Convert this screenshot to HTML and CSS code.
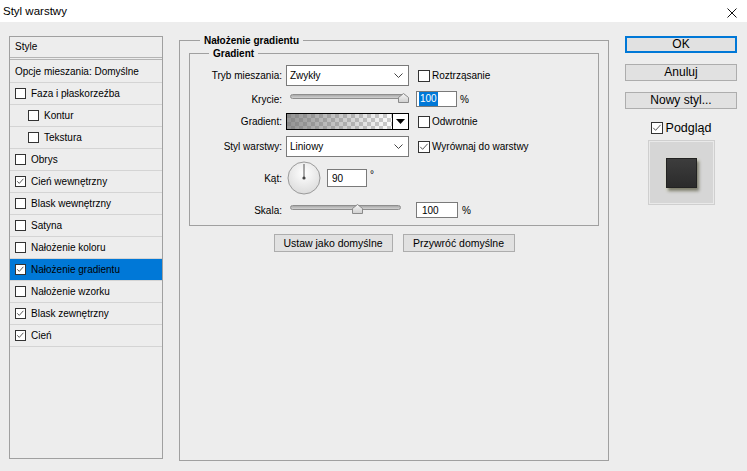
FILE: index.html
```html
<!DOCTYPE html>
<html lang="pl">
<head>
<meta charset="utf-8">
<title>Styl warstwy</title>
<link rel="stylesheet" href="styles.css">
</head>
<body>
<div class="titlebar">
  <span class="title">Styl warstwy</span>
  <svg class="close" width="10" height="10" viewBox="0 0 10 10"><path d="M0.5 0.5L9.5 9.5M9.5 0.5L0.5 9.5" stroke="#111" stroke-width="1" fill="none"/></svg>
</div>
<div class="main">
  <div class="styles">
    <div class="s-head">Style</div>
    <div class="s-row first">Opcje mieszania: Domyślne</div>
    <div class="s-row"><span class="cb small"></span>Faza i płaskorzeźba</div>
    <div class="s-row indent"><span class="cb small"></span>Kontur</div>
    <div class="s-row indent"><span class="cb small"></span>Tekstura</div>
    <div class="s-row"><span class="cb small"></span>Obrys</div>
    <div class="s-row"><span class="cb small"><svg viewBox="0 0 11 11" width="9" height="9"><path d="M1.5 5.2L4 7.8L9 2.2" stroke="#333" stroke-width="1" fill="none"/></svg></span>Cień wewnętrzny</div>
    <div class="s-row"><span class="cb small"></span>Blask wewnętrzny</div>
    <div class="s-row"><span class="cb small"></span>Satyna</div>
    <div class="s-row"><span class="cb small"></span>Nałożenie koloru</div>
    <div class="s-row selected"><span class="cb small"><svg viewBox="0 0 11 11" width="9" height="9"><path d="M1.5 5.2L4 7.8L9 2.2" stroke="#333" stroke-width="1" fill="none"/></svg></span>Nałożenie gradientu</div>
    <div class="s-row"><span class="cb small"></span>Nałożenie wzorku</div>
    <div class="s-row"><span class="cb small"><svg viewBox="0 0 11 11" width="9" height="9"><path d="M1.5 5.2L4 7.8L9 2.2" stroke="#333" stroke-width="1" fill="none"/></svg></span>Blask zewnętrzny</div>
    <div class="s-row"><span class="cb small"><svg viewBox="0 0 11 11" width="9" height="9"><path d="M1.5 5.2L4 7.8L9 2.2" stroke="#333" stroke-width="1" fill="none"/></svg></span>Cień</div>
  </div>

  <div class="group outer">
    <div class="legend">Nałożenie gradientu</div>
    <div class="group inner">
      <div class="legend in">Gradient</div>

      <div class="row r1">
        <span class="lbl">Tryb mieszania:</span>
        <div class="select"><span>Zwykły</span><svg width="9" height="5" viewBox="0 0 9 5"><path d="M0.5 0.5L4.5 4.5L8.5 0.5" stroke="#444" fill="none"/></svg></div>
        <label class="chk"><span class="cb"></span>Roztrząsanie</label>
      </div>

      <div class="row r2">
        <span class="lbl">Krycie:</span>
        <div class="slider"><div class="track"></div><svg class="thumb thumb-krycie" width="11" height="10" viewBox="0 0 11 10"><defs><linearGradient id="tg1" x1="0" y1="0" x2="0" y2="1"><stop offset="0" stop-color="#f6f6f6"/><stop offset="1" stop-color="#cfcfcf"/></linearGradient></defs><path d="M0.5 9.5V4.5L5.5 0.5L10.5 4.5V9.5Z" fill="url(#tg1)" stroke="#8a8a8a"/></svg></div>
        <div class="field f41"><span class="sel">100</span></div>
        <span class="unit">%</span>
      </div>

      <div class="row r3">
        <span class="lbl">Gradient:</span>
        <div class="grad"><div class="grad-fill"></div><div class="grad-btn"><svg width="9" height="5" viewBox="0 0 9 5"><path d="M0 0H9L4.5 5Z" fill="#000"/></svg></div></div>
        <label class="chk"><span class="cb"></span>Odwrotnie</label>
      </div>

      <div class="row r4">
        <span class="lbl">Styl warstwy:</span>
        <div class="select"><span>Liniowy</span><svg width="9" height="5" viewBox="0 0 9 5"><path d="M0.5 0.5L4.5 4.5L8.5 0.5" stroke="#444" fill="none"/></svg></div>
        <label class="chk"><span class="cb"><svg viewBox="0 0 12 12" width="10" height="10"><path d="M1.5 5.8L4.3 8.8L10.3 2.2" stroke="#333" stroke-width="1" fill="none"/></svg></span>Wyrównaj do warstwy</label>
      </div>

      <div class="row r5">
        <span class="lbl">Kąt:</span>
        <svg class="dial" width="34" height="34" viewBox="0 0 34 34"><defs><radialGradient id="dg" cx="0.5" cy="0.35" r="0.7"><stop offset="0" stop-color="#ffffff"/><stop offset="1" stop-color="#d9d9d9"/></radialGradient></defs><circle cx="17" cy="17" r="16" fill="url(#dg)" stroke="#9a9a9a"/><line x1="17" y1="17" x2="17" y2="3" stroke="#555" stroke-width="1"/><circle cx="17" cy="17" r="1.6" fill="#444"/></svg>
        <div class="field f40 tall"><span class="val">90</span></div>
        <span class="deg">°</span>
      </div>

      <div class="row r6">
        <span class="lbl">Skala:</span>
        <div class="slider"><div class="track short"></div><svg class="thumb thumb-skala" width="11" height="10" viewBox="0 0 11 10"><defs><linearGradient id="tg2" x1="0" y1="0" x2="0" y2="1"><stop offset="0" stop-color="#f6f6f6"/><stop offset="1" stop-color="#cfcfcf"/></linearGradient></defs><path d="M0.5 9.5V4.5L5.5 0.5L10.5 4.5V9.5Z" fill="url(#tg2)" stroke="#8a8a8a"/></svg></div>
        <div class="field f42"><span class="val">100</span></div>
        <span class="unit u2">%</span>
      </div>
    </div>

    <div class="btnrow">
      <button class="pbtn w119">Ustaw jako domyślne</button>
      <button class="pbtn w112">Przywróć domyślne</button>
    </div>
  </div>

  <div class="side">
    <button class="btn ok">OK</button>
    <button class="btn">Anuluj</button>
    <button class="btn">Nowy styl...</button>
    <label class="preview-chk"><span class="cb"><svg viewBox="0 0 12 12" width="10" height="10"><path d="M1.5 5.8L4.3 8.8L10.3 2.2" stroke="#333" stroke-width="1" fill="none"/></svg></span>Podgląd</label>
    <div class="preview"><div class="square"></div></div>
  </div>
</div>
</body>
</html>
```

FILE: styles.css
```css
* { box-sizing: border-box; }
html, body { margin: 0; padding: 0; }
body {
  width: 747px;
  height: 471px;
  overflow: hidden;
  background: #ededed;
  font-family: "Liberation Sans", Arial, sans-serif;
  font-size: 10px;
  color: #000;
}

.titlebar {
  height: 22px;
  background: #fff;
  display: flex;
  align-items: center;
  justify-content: space-between;
  padding: 0 10px 0 3px;
}
.title { font-size: 11.5px; }
.close { display: block; margin-top: 3px; }

.main {
  display: flex;
  align-items: flex-start;
  padding: 14px 0 0 9px;
}

/* left list */
.styles {
  width: 154px;
  height: 423px;
  border: 1px solid #a0a0a0;
  flex: none;
}
.s-head {
  height: 23px;
  line-height: 20px;
  padding-left: 5px;
  border-bottom: 3px double #b4b4b4;
}
.s-row {
  height: 22px;
  display: flex;
  align-items: center;
  padding-left: 5px;
  border-bottom: 1px solid #d4d4d4;
  white-space: nowrap;
}
.s-row.first { height: 23px; }
.s-row.indent { padding-left: 18px; }
.s-row.selected { background: #0078d7; }

.cb {
  width: 12px;
  height: 12px;
  border: 1px solid #333;
  background: #fff;
  display: inline-flex;
  align-items: center;
  justify-content: center;
  flex: none;
  margin-right: 2px;
}
.cb.small {
  width: 11px;
  height: 11px;
  margin-right: 5px;
}
.cb svg { display: block; }

/* group boxes */
.group { border: 1px solid #a0a0a0; }
.outer {
  flex: none;
  margin-left: 16px;
  margin-top: 4px;
  width: 430px;
  height: 421px;
}
.legend {
  display: table;
  margin: -7px 0 0 20px;
  padding: 0 4px;
  background: #ededed;
  font-weight: bold;
  line-height: 13px;
}
.legend.in { margin-left: 19px; }
.inner {
  margin: 6px 0 0 9px;
  width: 410px;
  padding-bottom: 7px;
}

.row { display: flex; align-items: center; }
.r1 { height: 21px; margin-top: 5px; }
.r2 { height: 16px; margin-top: 5px; }
.r3 { height: 17px; margin-top: 6px; }
.r4 { height: 21px; margin-top: 6px; }
.r5 { height: 34px; margin-top: 4px; }
.r6 { height: 16px; margin-top: 7px; }

.lbl {
  width: 92px;
  flex: none;
  text-align: right;
  margin-right: 4px;
  white-space: nowrap;
}

.select {
  width: 123px;
  height: 21px;
  flex: none;
  border: 1px solid #7a7a7a;
  background: #fff;
  display: flex;
  align-items: center;
  justify-content: space-between;
  padding: 0 5px 0 3px;
}
.select svg { display: block; }

.chk {
  display: flex;
  align-items: center;
  margin-left: 9px;
  white-space: nowrap;
}

.slider {
  position: relative;
  width: 123px;
  height: 16px;
  flex: none;
}
.track {
  margin: 3px 0 0 4px;
  width: 116px;
  height: 5px;
  border: 1px solid #8e8e8e;
  border-radius: 3px;
  background: linear-gradient(#a9a9a9, #d2d2d2);
}
.track.short { width: 111px; }
.thumb { position: absolute; top: 2px; display: block; }
.thumb-krycie { left: 112px; }
.thumb-skala { left: 66px; }

.field {
  height: 16px;
  border: 1px solid #7a7a7a;
  background: #fff;
  margin-left: 7px;
  display: flex;
  align-items: center;
  padding-left: 2px;
  flex: none;
}
.field.tall { height: 18px; margin-left: 6px; padding-left: 4px; }
.f40 { width: 40px; }
.f41 { width: 41px; }
.f42 { width: 42px; padding-left: 5px; }
.sel {
  background: #0078d7;
  color: #fff;
  padding: 1px 1px 1px 1px;
  line-height: 12px;
}
.unit { margin-left: 3px; }
.unit.u2 { margin-left: 4px; }
.deg { margin-left: 3px; align-self: flex-start; margin-top: 8px; }

.grad {
  width: 123px;
  height: 17px;
  flex: none;
  border: 1px solid #000;
  display: flex;
}
.grad-fill {
  flex: 1;
  background:
    linear-gradient(to right, rgba(110,110,110,0.75), rgba(110,110,110,0)),
    conic-gradient(#ffffff 25%, #cdcdcd 0 50%, #ffffff 0 75%, #cdcdcd 0) 0 0 / 8px 8px;
}
.grad-btn {
  width: 16px;
  border-left: 1px solid #000;
  background: #fff;
  display: flex;
  align-items: center;
  justify-content: center;
}
.grad-btn svg { display: block; }

.dial { display: block; margin-left: 1px; flex: none; }

.btnrow {
  display: flex;
  justify-content: center;
  gap: 10px;
  margin-top: 8px;
}
.pbtn {
  height: 18px;
  background: #e1e1e1;
  border: 1px solid #adadad;
  font-family: inherit;
  font-size: 10.5px;
  color: #000;
  padding: 0;
}
.w119 { width: 119px; }
.w112 { width: 112px; }

/* right column */
.side {
  flex: none;
  margin-left: 16px;
  width: 112px;
  display: flex;
  flex-direction: column;
  align-items: center;
}
.btn {
  width: 112px;
  height: 17px;
  background: #e1e1e1;
  border: 1px solid #adadad;
  font-family: inherit;
  font-size: 12px;
  line-height: 13px;
  color: #000;
  padding: 0;
  margin-top: 11px;
}
.btn.ok {
  margin-top: 0;
  border-color: #0078d7;
  box-shadow: inset 0 0 0 1px #0078d7;
}
.preview-chk {
  display: flex;
  align-items: center;
  height: 13px;
  margin-top: 12px;
  font-size: 12.5px;
}
.preview-chk .cb { margin-right: 3px; }
.preview {
  margin-top: 7px;
  width: 65px;
  height: 63px;
  background: #d6d6d6;
  border: 1px solid #e9e9e9;
  box-shadow: 0 0 0 1px #cfcfcf;
  padding: 16px 0 0 16px;
}
.square {
  width: 31px;
  height: 30px;
  background: linear-gradient(#3d3d3d, #2b2b2b);
  border: 1px solid #222;
  box-shadow: 2px 3px 3px rgba(0,0,0,0.45), 1px 2px 4px rgba(235,235,190,0.9);
}
```
